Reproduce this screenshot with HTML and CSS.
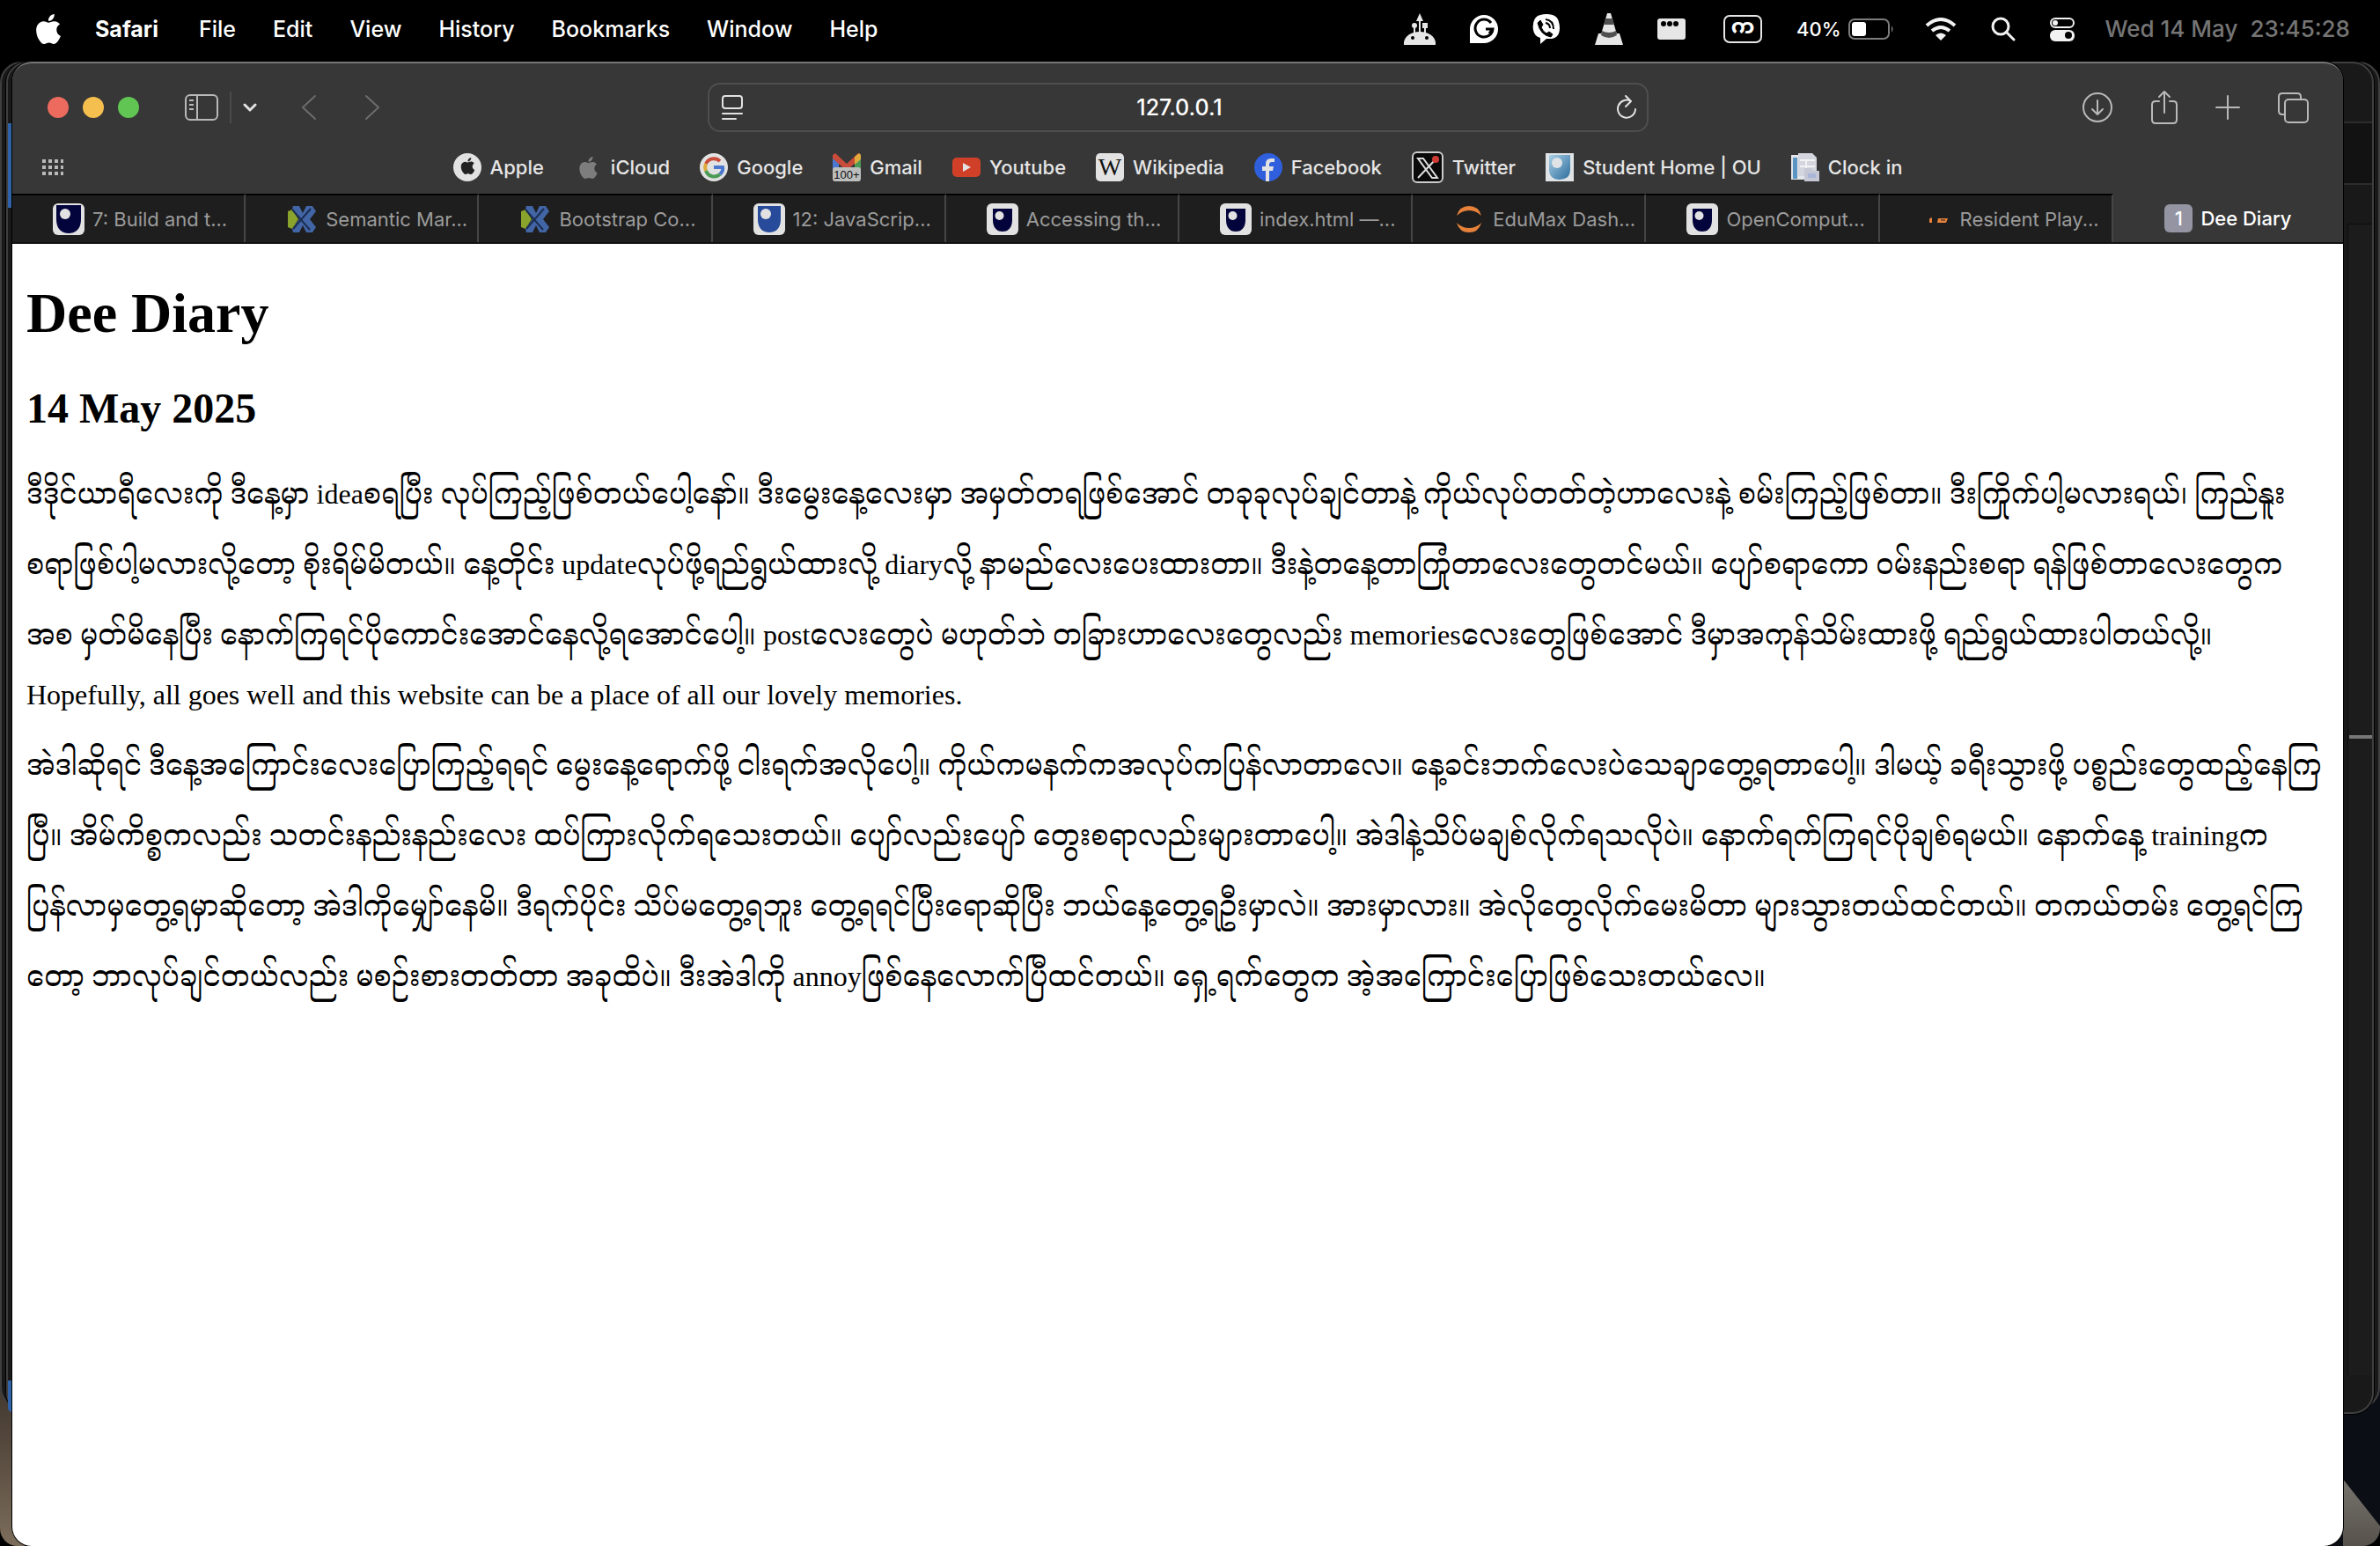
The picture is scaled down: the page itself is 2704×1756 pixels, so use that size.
FILE: index.html
```html
<!DOCTYPE html>
<html lang="en">
<head>
<meta charset="utf-8">
<meta name="viewport" content="width=device-width, initial-scale=1">
<title>Dee Diary</title>
<link rel="stylesheet" href="styles.css">
</head>
<body>
<svg class="defs" aria-hidden="true">
  <symbol id="apple" viewBox="0 0 24 24"><path d="M12.152 6.896c-.948 0-2.415-1.078-3.96-1.04-2.04.027-3.91 1.183-4.961 3.014-2.117 3.675-.546 9.103 1.519 12.09 1.013 1.454 2.208 3.09 3.792 3.039 1.52-.065 2.09-.987 3.935-.987 1.831 0 2.35.987 3.96.948 1.637-.026 2.676-1.48 3.676-2.948 1.156-1.688 1.636-3.325 1.662-3.415-.039-.013-3.182-1.221-3.22-4.857-.026-3.04 2.48-4.494 2.597-4.559-1.429-2.09-3.623-2.324-4.39-2.376-2-.156-3.675 1.09-4.61 1.09zM15.53 3.83c.843-1.012 1.4-2.427 1.245-3.83-1.207.052-2.662.805-3.532 1.818-.78.896-1.454 2.338-1.273 3.714 1.338.104 2.715-.688 3.559-1.701"/></symbol>
  <symbol id="shield" viewBox="0 0 36 36"><rect width="36" height="36" rx="6" fill="#e2e2e2"/><path d="M4 2h28v16c0 10-5 16-14 16S4 28 4 18z" fill="#04043c"/><ellipse cx="14" cy="12" rx="6" ry="6" fill="#e2e2e2"/></symbol>
  <symbol id="shield-small" viewBox="0 0 36 36"><rect width="36" height="36" rx="6" fill="#e2e2e2"/><path d="M7 6h22v13c0 8-4 13-11 13S7 27 7 19z" fill="#04043c"/><circle cx="14.500" cy="14" r="5" fill="#e2e2e2"/></symbol>
  <symbol id="shield-blue" viewBox="0 0 36 36"><rect width="36" height="36" rx="6" fill="#e2e2e2"/><path d="M5 3h26v15c0 10-5 15-13 15S5 28 5 18z" fill="#274b9a"/><ellipse cx="14" cy="12" rx="6" ry="6" fill="#e2e2e2"/></symbol>
  <symbol id="cross" viewBox="0 0 34 34"><path d="M1 8l5-2 7 11-7 11-5-2z" fill="#8aa32c"/><path d="M7 2h7l4 8 4-8h7l4 6-7 9 7 9-4 6h-7l-4-8-4 8H7l-1-4 8-11L6 5z" fill="#4265a6"/><path d="M6 6l20 23M27 5L7 28" stroke="#1b2d50" stroke-width="2"/></symbol>
</svg>

<header class="menubar">
  <nav class="menus">
    <button class="menu" aria-label="Apple menu"><svg class="logo" width="34" height="34"><use href="#apple"/></svg></button>
    <button class="menu app">Safari</button>
    <button class="menu">File</button>
    <button class="menu">Edit</button>
    <button class="menu">View</button>
    <button class="menu">History</button>
    <button class="menu">Bookmarks</button>
    <button class="menu">Window</button>
    <button class="menu">Help</button>
  </nav>
  <div class="status">
    <svg width="36" height="36" viewBox="0 0 36 36" fill="#e6e6e6"><path d="M0 36v-3C1 26 8 21 18 21s17 5 18 12v3z"/><path d="M18 0l4 9h-3v13h-2V9h-3z"/><circle cx="12" cy="14" r="3"/><path d="M11 15h2v8h-2zM21 11h6v6h-2v6h-2v-6h-2z"/><circle cx="10" cy="28" r="2" fill="#000"/><circle cx="26" cy="28" r="2" fill="#000"/></svg>
    <svg width="32" height="32" viewBox="0 0 32 32"><path d="M0 32V16a16 16 0 1 1 16 16z" fill="#fff"/><path d="M24 9a10 10 0 1 0 2 7h-8M26 16l-4 5" fill="none" stroke="#000" stroke-width="3"/></svg>
    <svg width="32" height="34" viewBox="0 0 32 34"><path d="M9 1Q16-1 23 1q6 2 7 8 2 7 0 13-2 5-8 6h-6l-7 6v-7Q2 25 1 18q-1-6 1-11 2-5 7-6z" fill="#fff"/><path d="M9 7l3 5-2 3q2 5 6 7l3-2 4 3-2 3q-12-2-15-16z" fill="#000" stroke="#000" stroke-width="1"/><path d="M15 6q9 1 9 11M15 10q5 1 5 6" fill="none" stroke="#000" stroke-width="2"/></svg>
    <svg width="32" height="36" viewBox="0 0 32 36"><path d="M4 23h24l4 13H0z" fill="#e6e6e6"/><path d="M14 0h4l7 24q-9 7-18 0z" fill="#e6e6e6"/><path d="M12 6h8l2 7H10zM8 20q8 4 16 0l1 5q-9 6-18 0z" fill="#505050"/></svg>
    <svg width="32" height="24" viewBox="0 0 32 24"><rect width="32" height="24" rx="3" fill="#e6e6e6"/><g fill="#000"><circle cx="7" cy="6" r="3"/><circle cx="14" cy="6" r="3"/><circle cx="21" cy="6" r="3"/></g></svg>
    <span class="input-source" lang="my">က</span>
    <span class="battery">40%<svg width="52" height="24" viewBox="0 0 52 24"><rect x="1" y="1" width="45" height="22" rx="6" fill="none" stroke="#7d7d7d" stroke-width="2"/><rect x="4" y="4" width="16" height="16" rx="3" fill="#fff"/><path d="M49 8q3 4 0 8z" fill="#7d7d7d"/></svg></span>
    <svg width="36" height="26" viewBox="0 0 36 26" fill="none" stroke="#f2f2f2" stroke-width="4"><path d="M2 9q16-14 32 0M8 15q10-8 20 0"/><path d="M12 20q6-5 12 0l-6 6z" fill="#f2f2f2" stroke="none"/></svg>
    <svg width="28" height="28" viewBox="0 0 28 28" fill="none" stroke="#f2f2f2" stroke-width="3"><circle cx="11" cy="11" r="9"/><path d="M18 18l8 8" stroke-linecap="round"/></svg>
    <svg width="28" height="28" viewBox="0 0 28 28"><rect x="1" y="2" width="26" height="10" rx="5" fill="none" stroke="#f2f2f2" stroke-width="2"/><circle cx="6" cy="7" r="3" fill="#f2f2f2"/><rect y="15" width="28" height="13" rx="6" fill="#f2f2f2"/><circle cx="21" cy="21" r="4" fill="#000"/></svg>
    <time class="clock"><span>Wed 14 May</span><span>23:45:28</span></time>
  </div>
</header>

<div class="desktop">
  <div class="back-window far"></div>
  <div class="back-window near"><i class="rule one"></i><i class="rule two"></i><i class="panel"></i><i class="marker"></i></div>

  <div class="window">
    <div class="toolbar">
      <div class="tools">
        <span class="lights"><button class="light red" aria-label="Close"></button><button class="light yellow" aria-label="Minimise"></button><button class="light green" aria-label="Zoom"></button></span>
        <button class="tool sidebar" aria-label="Sidebar"><svg width="40" height="32" viewBox="0 0 40 32" fill="none" stroke="#b9b9b9" stroke-width="2"><rect x="2" y="2" width="36" height="28" rx="5"/><path d="M15 2v28M6 8h5M6 13h5M6 18h5"/></svg></button>
        <button class="tool chevron" aria-label="Tab groups"><svg width="16" height="12" viewBox="0 0 16 12" fill="none" stroke="#e2e2e2" stroke-width="3" stroke-linecap="round" stroke-linejoin="round"><path d="M2 3l6 6 6-6"/></svg></button>
        <button class="tool back" aria-label="Back"><svg width="18" height="30" viewBox="0 0 18 30" fill="none" stroke="#6c6c6c" stroke-width="2" stroke-linecap="round"><path d="M16 2L2 15l14 13"/></svg></button>
        <button class="tool forward" aria-label="Forward"><svg width="18" height="30" viewBox="0 0 18 30" fill="none" stroke="#6c6c6c" stroke-width="2" stroke-linecap="round"><path d="M2 2l14 13L2 28"/></svg></button>
      </div>
      <div class="address">
        <button class="tool" aria-label="Page menu"><svg width="24" height="30" viewBox="0 0 24 30" fill="none" stroke="#e2e2e2" stroke-width="2" stroke-linecap="round"><rect x="1" y="2" width="22" height="14" rx="3"/><path d="M1 22h22M1 28h15"/></svg></button>
        <input type="text" value="127.0.0.1" aria-label="Address">
        <button class="tool" aria-label="Reload"><svg width="24" height="30" viewBox="0 0 24 30" fill="none" stroke="#e2e2e2" stroke-width="2" stroke-linecap="round" stroke-linejoin="round"><path d="M17 8A10 10 0 1 0 22 17M11 2l6 6-6 6"/></svg></button>
      </div>
      <div class="actions">
        <button class="tool" aria-label="Downloads"><svg width="36" height="36" viewBox="0 0 36 36" fill="none" stroke="#b9b9b9" stroke-width="2" stroke-linecap="round" stroke-linejoin="round"><circle cx="18" cy="18" r="16"/><path d="M18 10v16M12 20l6 6 6-6"/></svg></button>
        <button class="tool" aria-label="Share"><svg width="32" height="40" viewBox="0 0 32 40" fill="none" stroke="#b9b9b9" stroke-width="2" stroke-linecap="round" stroke-linejoin="round"><path d="M10 13H6q-4 0-4 4v17q0 4 4 4h20q4 0 4-4V17q0-4-4-4h-4M16 26V2M10 8l6-6 6 6"/></svg></button>
        <button class="tool" aria-label="New tab"><svg width="28" height="28" viewBox="0 0 28 28" stroke="#b9b9b9" stroke-width="2" stroke-linecap="round"><path d="M14 1v26M1 14h26"/></svg></button>
        <button class="tool" aria-label="Tab overview"><svg width="36" height="36" viewBox="0 0 36 36" fill="none" stroke="#b9b9b9" stroke-width="2"><path d="M9 26H6q-4 0-4-4V6q0-4 4-4h17q4 0 4 4v3"/><rect x="9" y="9" width="26" height="26" rx="4"/></svg></button>
      </div>
    </div>

    <nav class="favourites">
      <button class="tool grid" aria-label="Start page"><svg width="24" height="18" viewBox="0 0 24 18" stroke="#b9b9b9" stroke-width="4" stroke-dasharray="4 3"><path d="M0 2h24M0 9h24M0 16h24"/></svg></button>
      <ul>
        <li><a href="#"><svg width="32" height="32" viewBox="0 0 32 32"><circle cx="16" cy="16" r="16" fill="#e2e2e2"/><use href="#apple" x="7" y="5" width="19" height="19" fill="#222"/></svg>Apple</a></li>
        <li><a href="#"><svg width="32" height="32" viewBox="0 0 32 32"><use href="#apple" x="4" y="4" width="25" height="25" fill="#7d7d7d"/></svg>iCloud</a></li>
        <li><a href="#"><svg width="32" height="32" viewBox="0 0 32 32" fill="none" stroke-width="4"><circle cx="16" cy="16" r="16" fill="#e2e2e2"/><path d="M23 9A10 10 0 0 0 7 12" stroke="#c94b3a"/><path d="M7 12a10 10 0 0 0 0 8" stroke="#dfa93c"/><path d="M7 20a10 10 0 0 0 16 4" stroke="#4b9a55"/><path d="M23 24q4-4 3-8H16" stroke="#4a78d0"/></svg>Google</a></li>
        <li><a href="#"><svg width="32" height="32" viewBox="0 0 32 32"><path d="M0 4h7v18H0z" fill="#4a78d0"/><path d="M25 4h7v18h-7z" fill="#4b9a55"/><path d="M0 2l3-2 13 12L29 0l3 2v3L16 20 0 6z" fill="#c94b3a"/><path d="M25 4l5-4 2 2v5l-7 6z" fill="#dfa93c"/><rect y="16" width="32" height="16" rx="3" fill="#bdbfbd"/><text class="badge" x="16" y="29" text-anchor="middle">100+</text></svg>Gmail</a></li>
        <li><a href="#"><svg width="32" height="32" viewBox="0 0 32 32"><rect y="5" width="32" height="22" rx="5" fill="#d04028"/><path d="M12 11l9 5-9 5z" fill="#e2e2e2"/></svg>Youtube</a></li>
        <li><a href="#"><svg width="32" height="32" viewBox="0 0 32 32"><rect width="32" height="32" rx="5" fill="#e2e2e2"/><text class="wiki" x="16" y="25" text-anchor="middle">W</text></svg>Wikipedia</a></li>
        <li><a href="#"><svg width="32" height="32" viewBox="0 0 32 32"><circle cx="16" cy="16" r="16" fill="#2f5fdc"/><path d="M13 32V20H9v-5h4v-3q0-6 6-6h4v4h-3q-3 0-3 3v2h5l-1 5h-4v12z" fill="#e2e2e2"/></svg>Facebook</a></li>
        <li><a href="#"><svg width="36" height="36" viewBox="0 0 36 36"><rect x="1" y="1" width="34" height="34" rx="5" fill="#0a0a0a" stroke="#ccc" stroke-width="2"/><path d="M28 8L7 30M7 8h6l16 22h-6z" fill="#0a0a0a" stroke="#ddd" stroke-width="2"/><circle cx="27" cy="9" r="4" fill="#cf3a35"/></svg>Twitter</a></li>
        <li><a href="#"><svg width="32" height="32" viewBox="0 0 32 32"><defs><linearGradient id="sky" x2="1" y2="1"><stop offset="0" stop-color="#a9cfe6"/><stop offset="1" stop-color="#2c6c9c"/></linearGradient></defs><path d="M0 0h32v32H0z" fill="#dfe3e6"/><path d="M4 2h24v16q0 12-12 12T4 18z" fill="url(#sky)"/><circle cx="13" cy="11" r="6" fill="#dfe3e6"/></svg>Student Home | OU</a></li>
        <li><a href="#"><svg width="32" height="32" viewBox="0 0 32 32"><path d="M0 2h18v28H0z" fill="#e2e5ea"/><path d="M2 5h5v24H2z" fill="#5b93c3"/><path d="M8 0h16l5 5v21H8z" fill="#d3d6de"/><path d="M10 8h17M10 15h17M17 8v15" stroke="#f1f2f5" stroke-width="2"/><path d="M15 17h8l2 3h7v12H15z" fill="#c5c7d4"/><path d="M19 23h9v5h-9z" fill="#aab6d8"/></svg>Clock in</a></li>
      </ul>
    </nav>

    <div class="tabs" role="tablist">
      <button class="tab" role="tab"><svg width="36" height="36"><use href="#shield"/></svg>7: Build and t...</button>
      <button class="tab" role="tab"><svg width="36" height="34"><use href="#cross"/></svg>Semantic Mar...</button>
      <button class="tab" role="tab"><svg width="36" height="34"><use href="#cross"/></svg>Bootstrap Co...</button>
      <button class="tab" role="tab"><svg width="36" height="36"><use href="#shield-blue"/></svg>12: JavaScrip...</button>
      <button class="tab" role="tab"><svg width="36" height="36"><use href="#shield-small"/></svg>Accessing th...</button>
      <button class="tab" role="tab"><svg width="36" height="36"><use href="#shield-small"/></svg>index.html —...</button>
      <button class="tab" role="tab"><svg width="36" height="36" viewBox="0 0 36 36" fill="#e8823a"><path d="M4 14Q7 3 18 3t14 11Q26 8 18 8T4 14zM4 22q3 11 14 11t14-11q-6 6-14 6T4 22z"/></svg>EduMax Dash...</button>
      <button class="tab" role="tab"><svg width="36" height="36"><use href="#shield-small"/></svg>OpenComput...</button>
      <button class="tab" role="tab"><svg width="36" height="36" viewBox="0 0 36 36" fill="#e8823a"><path d="M10 18q3-4 3 0v4h-3zM20 17h11l-2 5H19z"/><path d="M23 19h5" stroke="#1e1e1e"/></svg>Resident Play...</button>
      <button class="tab current" role="tab" aria-selected="true"><span class="tab-badge">1</span>Dee Diary</button>
    </div>

    <main class="page">
      <h1>Dee Diary</h1>
      <h2>14 May 2025</h2>
      <p class="entry" lang="my">ဒီဒိုင်ယာရီလေးကို ဒီနေ့မှာ ideaစရပြီး လုပ်ကြည့်ဖြစ်တယ်ပေါ့နော်။ ဒီးမွေးနေ့လေးမှာ အမှတ်တရဖြစ်အောင် တခုခုလုပ်ချင်တာနဲ့ ကိုယ်လုပ်တတ်တဲ့ဟာလေးနဲ့ စမ်းကြည့်ဖြစ်တာ။ ဒီးကြိုက်ပါ့မလားရယ်၊ ကြည်နူး<br>စရာဖြစ်ပါ့မလားလို့တော့ စိုးရိမ်မိတယ်။ နေ့တိုင်း updateလုပ်ဖို့ရည်ရွယ်ထားလို့ diaryလို့ နာမည်လေးပေးထားတာ။ ဒီးနဲ့တနေ့တာကြုံတာလေးတွေတင်မယ်။ ပျော်စရာကော ဝမ်းနည်းစရာ ရန်ဖြစ်တာလေးတွေက<br>အစ မှတ်မိနေပြီး နောက်ကြရင်ပိုကောင်းအောင်နေလို့ရအောင်ပေါ့။ postလေးတွေပဲ မဟုတ်ဘဲ တခြားဟာလေးတွေလည်း memoriesလေးတွေဖြစ်အောင် ဒီမှာအကုန်သိမ်းထားဖို့ ရည်ရွယ်ထားပါတယ်လို့။</p>
      <p class="note">Hopefully, all goes well and this website can be a place of all our lovely memories.</p>
      <p class="entry" lang="my">အဲဒါဆိုရင် ဒီနေ့အကြောင်းလေးပြောကြည့်ရရင် မွေးနေ့ရောက်ဖို့ ငါးရက်အလိုပေါ့။ ကိုယ်ကမနက်ကအလုပ်ကပြန်လာတာလေ။ နေ့ခင်းဘက်လေးပဲသေချာတွေ့ရတာပေါ့။ ဒါမယ့် ခရီးသွားဖို့ ပစ္စည်းတွေထည့်နေကြ<br>ပြီ။ အိမ်ကိစ္စကလည်း သတင်းနည်းနည်းလေး ထပ်ကြားလိုက်ရသေးတယ်။ ပျော်လည်းပျော် တွေးစရာလည်းများတာပေါ့။ အဲဒါနဲ့သိပ်မချစ်လိုက်ရသလိုပဲ။ နောက်ရက်ကြရင်ပိုချစ်ရမယ်။ နောက်နေ့ trainingက<br>ပြန်လာမှတွေ့ရမှာဆိုတော့ အဲဒါကိုမျှော်နေမိ။ ဒီရက်ပိုင်း သိပ်မတွေ့ရဘူး တွေ့ရရင်ပြီးရောဆိုပြီး ဘယ်နေ့တွေ့ရဦးမှာလဲ။ အားမှာလား။ အဲလိုတွေလိုက်မေးမိတာ များသွားတယ်ထင်တယ်။ တကယ်တမ်း တွေ့ရင်ကြ<br>တော့ ဘာလုပ်ချင်တယ်လည်း မစဉ်းစားတတ်တာ အခုထိပဲ။ ဒီးအဲဒါကို annoyဖြစ်နေလောက်ပြီထင်တယ်။ ရှေ့ရက်တွေက အဲ့အကြောင်းပြောဖြစ်သေးတယ်လေ။</p>
    </main>
  </div>
</div>
</body>
</html>
```
FILE: styles.css
```css
* { box-sizing: border-box; }

body {
  margin: 0;
  min-height: 100vh;
  display: flex;
  flex-direction: column;
  background: #000;
  color: #fff;
  font: 23px/28px Inter, "Liberation Sans", sans-serif;
}

button, input {
  margin: 0;
  padding: 0;
  border: 0;
  background: none;
  color: inherit;
  font: inherit;
}

svg { display: block; flex: none; }
.defs { position: absolute; width: 0; height: 0; }

/* Menu bar */
.menubar {
  display: flex;
  justify-content: space-between;
  align-items: center;
  height: 70px;
  padding: 0 34px 4px 38px;
  font-size: 25px;
  font-weight: 500;
}
.menus { display: flex; align-items: center; gap: 42px; }
.logo { fill: #fff; }
.menu.app { font-weight: 700; margin: 0 4px 0 -6px; }
.status { display: flex; align-items: center; gap: 39px; }
.input-source {
  display: grid;
  place-items: center;
  width: 44px;
  height: 32px;
  margin-left: 4px;
  border: 2px solid #e6e6e6;
  border-radius: 7px;
  font: 700 24px/28px "Noto Sans Myanmar", sans-serif;
}
.battery { display: flex; align-items: center; gap: 8px; margin-right: -4px; font-size: 22px; }
.clock { display: flex; gap: 14px; margin-left: -4px; color: #757575; font-size: 26px; }

/* Desktop and the windows lying behind the browser */
.desktop {
  position: relative;
  flex: 1;
  display: flex;
  padding: 0 42px 0 14px;
  background: linear-gradient(90deg, transparent 50%, #0b0e15 50%), linear-gradient(#3c332b 88%, #54483d 93%, #7c6d5b);
  border-radius: 0 0 20px 20px;
  overflow: hidden;
}
.desktop::before {
  content: "";
  position: absolute;
  top: 0;
  left: 0;
  right: 0;
  height: 40px;
  background: #000;
}
.desktop::after {
  content: "";
  position: absolute;
  right: 0;
  bottom: 0;
  width: 42px;
  height: 76px;
  background: linear-gradient(#77736d, #56524b);
  clip-path: polygon(0 0, 100% 70%, 100% 100%, 0 100%);
}
.back-window {
  position: absolute;
  top: 0;
  border: 2px solid #3f3f3f;
  border-radius: 24px;
  background: #191919;
}
.far { left: 0; right: 0; bottom: 156px; }
.near { left: 7px; right: 7px; bottom: 150px; box-shadow: 0 0 0 1px #000; }
.near::before, .near::after {
  content: "";
  position: absolute;
  left: 0;
  width: 5px;
  background: #2f62a8;
}
.near::before { top: 68px; height: 96px; }
.near::after { bottom: 0; height: 36px; border-radius: 0 0 0 24px; }
.rule { position: absolute; right: 0; width: 40px; height: 70px; border-top: 2px solid #2c2c2c; }
.rule.one { top: 66px; background: #121212; }
.rule.two { top: 136px; }
.panel {
  position: absolute;
  top: 182px;
  right: 0;
  bottom: 42px;
  width: 28px;
  border: 1px solid #0c0c0c;
  border-width: 1px 0 0 1px;
  background: #1c1c1c;
}
.marker { position: absolute; right: 0; top: 763px; width: 26px; height: 4px; background: #777; }

/* Browser window */
.window {
  position: relative;
  z-index: 1;
  flex: 1;
  display: flex;
  flex-direction: column;
  border-top: 2px solid #757575;
  border-radius: 22px;
  background: #373737;
  box-shadow: 0 0 0 1px #000;
  overflow: hidden;
}
.toolbar {
  display: grid;
  grid-template-columns: 790fr 1069fr 789fr;
  align-items: center;
  height: 100px;
}
.tool { display: grid; place-items: center; }
.tools { display: flex; align-items: center; padding-left: 40px; }
.lights { display: flex; gap: 16px; }
.light { width: 24px; height: 24px; border-radius: 50%; }
.red { background: #ed6a5e; }
.yellow { background: #f5bf4f; }
.green { background: #61c554; }
.sidebar { height: 36px; margin-left: 51px; padding-right: 12px; border-right: 2px solid #4a4a4a; }
.chevron { margin-left: 13px; }
.back { margin-left: 50px; }
.forward { margin-left: 54px; }
.address {
  display: flex;
  align-items: center;
  height: 56px;
  padding: 0 11px 0 14px;
  border: 2px solid #4e4e4e;
  border-radius: 14px;
}
.address input {
  flex: 1;
  min-width: 0;
  outline: 0;
  text-align: center;
  font-size: 25px;
  font-weight: 500;
}
.actions { display: flex; align-items: center; justify-content: flex-end; gap: 42px; padding-right: 39px; }

.favourites {
  display: grid;
  grid-template-columns: 34px 1fr 34px;
  align-items: center;
  height: 48px;
  padding-bottom: 13px;
}
.grid { padding-left: 34px; }
.favourites ul {
  display: flex;
  justify-content: center;
  gap: 34px;
  margin: 0;
  padding: 0;
  list-style: none;
}
.favourites a {
  display: flex;
  align-items: center;
  gap: 10px;
  height: 36px;
  color: #e6e6e6;
  font-weight: 500;
  font-size: 22px;
  text-decoration: none;
  white-space: nowrap;
}
.badge { font: 13px "Liberation Sans", sans-serif; fill: #111; }
.wiki { font: 28px "Liberation Serif", serif; fill: #111; }

.tabs {
  display: grid;
  grid-template-columns: repeat(9, minmax(0, 265fr)) minmax(0, 261fr);
  height: 57px;
  background: #1e1e1e;
  border-bottom: 2px solid #111;
}
.tab {
  display: flex;
  align-items: center;
  gap: 9px;
  padding-left: 46px;
  border-top: 2px solid #000;
  border-right: 2px solid #454545;
  color: #9b9b9b;
  font-size: 22px;
  white-space: nowrap;
}
.tab.current {
  justify-content: center;
  padding: 0;
  border: 0;
  background: #373737;
  color: #fff;
  font-weight: 500;
}
.tab-badge { width: 32px; line-height: 32px; border-radius: 6px; background: #9494a3; text-align: center; }

/* Diary page */
.page {
  flex: 1;
  padding: 43px 16px 16px;
  background: #fff;
  color: #000;
  font-family: "Liberation Serif", "Noto Serif Myanmar", serif;
  font-size: 32px;
}
h1 { margin: 0 0 44px; font-size: 64px; line-height: 72px; }
h2 { margin: 0 0 29px; font-size: 48px; line-height: 56px; }
.entry { margin: 0; font-weight: 500; line-height: 80px; white-space: nowrap; }
.note { margin: 0 0 12px; line-height: 56px; }
```
